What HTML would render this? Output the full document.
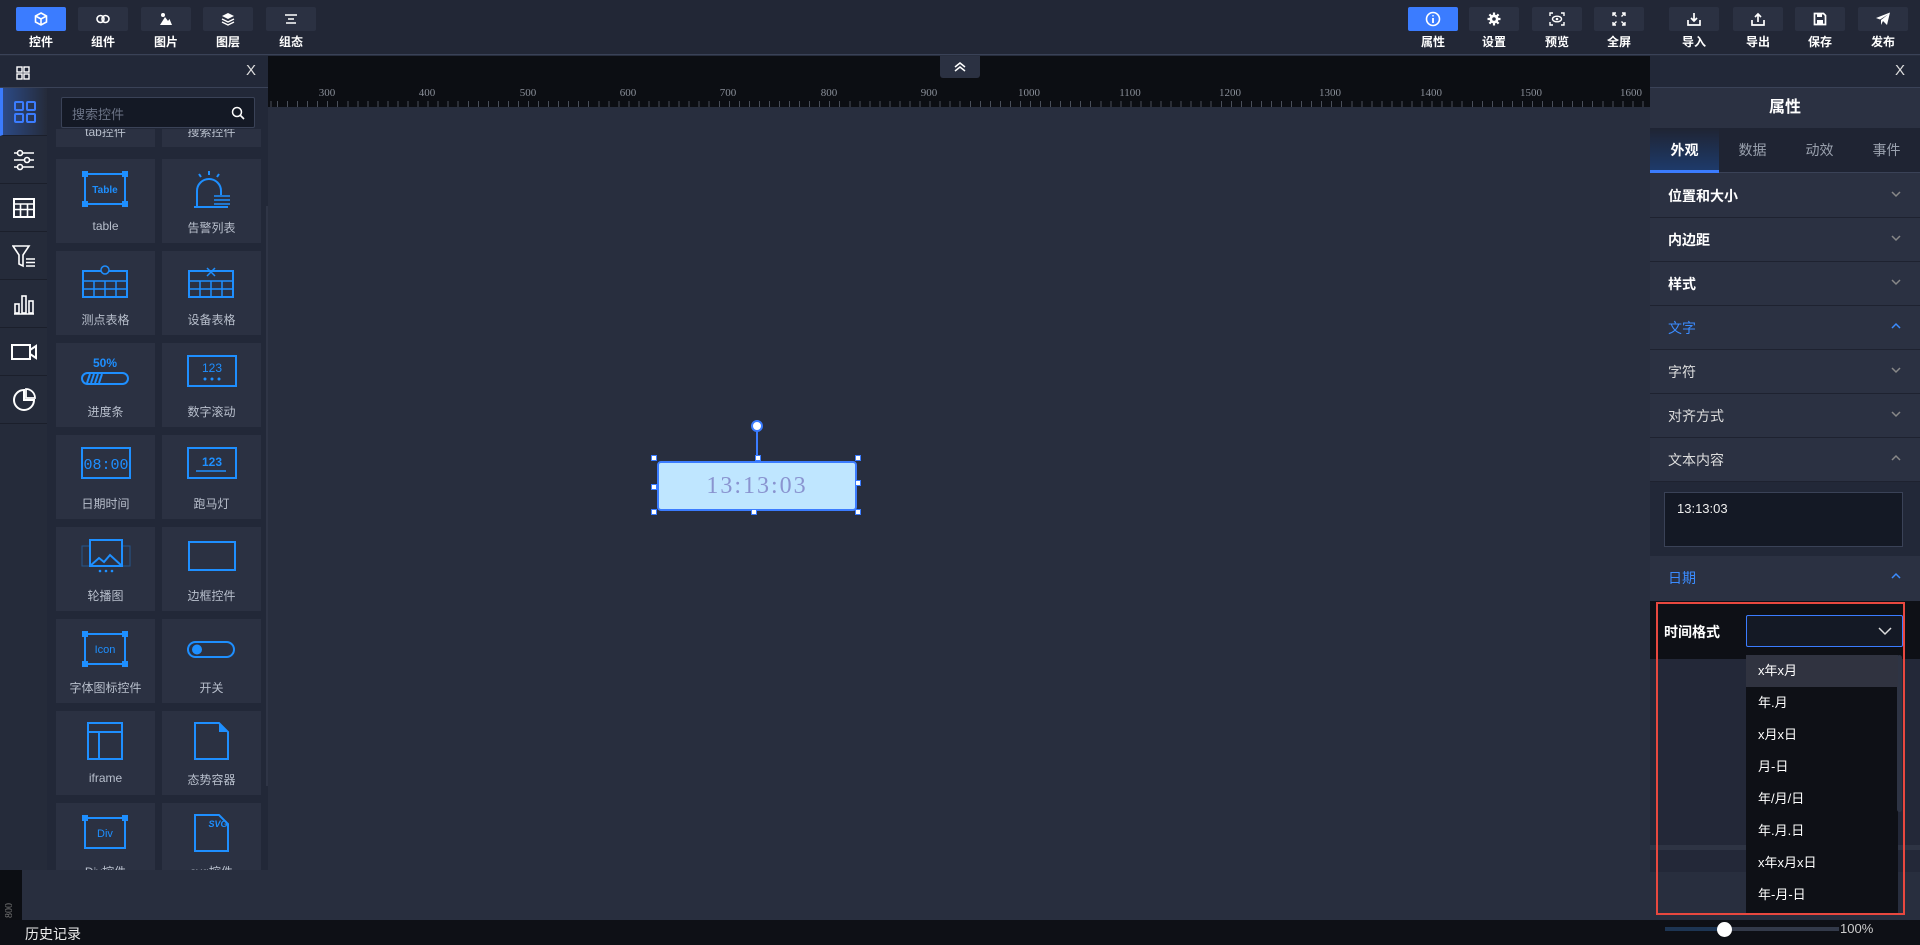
<!DOCTYPE html>
<html><head><meta charset="utf-8">
<style>
*{margin:0;padding:0;box-sizing:border-box}
body{width:1920px;height:945px;overflow:hidden;background:#282e3e;font-family:"Liberation Sans","Noto Sans CJK SC",sans-serif;color:#fff;position:relative}
.a{position:absolute}
.top{left:0;top:0;width:1920px;height:55px;background:#222736;border-bottom:1px solid #3a4257}
.btn{position:absolute;top:7px;width:50px;height:24px;background:#2b3142;border-radius:2px;display:flex;align-items:center;justify-content:center}
.btn.on{background:#3b7cff}
.bl{position:absolute;top:33px;width:60px;text-align:center;font-size:12px;font-weight:bold;color:#fff}
.lp{left:0;top:56px;width:268px;height:814px;background:#222838}
.card{position:absolute;width:99px;height:84px;background:#2b3142}
.card .t{position:absolute;left:0;right:0;top:60px;text-align:center;font-size:12px;color:#b8bfcc}
.card svg{position:absolute;left:24px;top:10px}
.ic{position:absolute;left:0;width:47px;height:48px;border-bottom:1px solid #1b1f2b;display:flex;align-items:center;justify-content:center}
.rp{left:1650px;top:56px;width:270px;height:816px;background:#2b3142}
.sec{position:absolute;left:0;width:270px;height:44px;border-bottom:1px solid #1e2230;font-size:14px;display:flex;align-items:center;padding-left:18px;color:#fff}
.sec .ch{position:absolute;right:18px;top:14px}
.dd{position:absolute;left:1746px;width:152px;height:32px;font-size:13px;color:#fff;padding-left:12px;line-height:32px}
</style></head><body>
<div class="a top"></div>
<div class="btn on" style="left:16px"><svg width="14" height="14" viewBox="0 0 14 14"><path d="M7 1L12.5 4V10L7 13L1.5 10V4Z M1.5 4L7 7L12.5 4 M7 7V13" stroke="#fff" stroke-width="1.6" fill="none"/></svg></div>
<div class="btn" style="left:78px"><svg width="16" height="10" viewBox="0 0 16 10"><circle cx="5.5" cy="5" r="3.5" stroke="#fff" stroke-width="1.6" fill="none"/><circle cx="10.5" cy="5" r="3.5" stroke="#fff" stroke-width="1.6" fill="none"/></svg></div>
<div class="btn" style="left:141px"><svg width="14" height="14" viewBox="0 0 14 14"><circle cx="4" cy="3" r="2" fill="#fff"/><path d="M1 13L6 5L9 9L10.5 7L13 13Z" fill="#fff"/></svg></div>
<div class="btn" style="left:203px"><svg width="14" height="14" viewBox="0 0 14 14"><path d="M7 1L13 4L7 7L1 4Z" fill="#fff"/><path d="M1 7L7 10L13 7M1 10L7 13L13 10" stroke="#fff" stroke-width="1.4" fill="none"/></svg></div>
<div class="btn" style="left:266px"><svg width="12" height="10" viewBox="0 0 12 10"><path d="M0 1H12M3 5H9M1 9H11" stroke="#fff" stroke-width="1.6"/></svg></div>
<div class="bl" style="left:11px">控件</div><div class="bl" style="left:73px">组件</div><div class="bl" style="left:136px">图片</div><div class="bl" style="left:198px">图层</div><div class="bl" style="left:261px">组态</div>
<div class="btn on" style="left:1408px"><svg width="16" height="16" viewBox="0 0 16 16"><circle cx="8" cy="8" r="6.5" stroke="#fff" stroke-width="1.6" fill="none"/><path d="M8 7V12M8 4.2V5.4" stroke="#fff" stroke-width="1.8"/></svg></div>
<div class="btn" style="left:1469px"><svg width="14" height="14" viewBox="0 0 14 14"><circle cx="7" cy="7" r="4.5" fill="#fff"/><path d="M7 0.5V13.5M0.5 7H13.5M2.4 2.4L11.6 11.6M11.6 2.4L2.4 11.6" stroke="#fff" stroke-width="2.2"/><circle cx="7" cy="7" r="1.8" fill="#2b3142"/></svg></div>
<div class="btn" style="left:1532px"><svg width="16" height="14" viewBox="0 0 16 14"><path d="M1 4V1H4M12 1H15V4M15 10V13H12M4 13H1V10" stroke="#fff" stroke-width="1.4" fill="none"/><ellipse cx="8" cy="7" rx="4.5" ry="2.8" stroke="#fff" stroke-width="1.4" fill="none"/><circle cx="8" cy="7" r="1.3" fill="#fff"/></svg></div>
<div class="btn" style="left:1594px"><svg width="14" height="14" viewBox="0 0 14 14"><path d="M1 4V1H4M1 1L4.5 4.5M10 1H13V4M13 1L9.5 4.5M13 10V13H10M13 13L9.5 9.5M4 13H1V10M1 13L4.5 9.5" stroke="#fff" stroke-width="1.4" fill="none"/></svg></div>
<div class="btn" style="left:1669px"><svg width="14" height="14" viewBox="0 0 14 14"><path d="M7 1V9M4 6L7 9L10 6M1 8V13H13V8" stroke="#fff" stroke-width="1.7" fill="none"/></svg></div>
<div class="btn" style="left:1733px"><svg width="14" height="14" viewBox="0 0 14 14"><path d="M7 10V2M4 5L7 2L10 5M1 8V13H13V8" stroke="#fff" stroke-width="1.7" fill="none"/></svg></div>
<div class="btn" style="left:1795px"><svg width="14" height="14" viewBox="0 0 14 14"><path d="M1.5 1.5H10.5L12.5 3.5V12.5H1.5Z" stroke="#fff" stroke-width="1.7" fill="none"/><rect x="4" y="2" width="5" height="3" fill="#fff"/><rect x="4" y="8" width="6" height="4" fill="#fff"/></svg></div>
<div class="btn" style="left:1858px"><svg width="16" height="14" viewBox="0 0 16 14"><path d="M1 6L15 0.5L12 13L8 9L6 13V8L13 2.5L5 7.5Z" fill="#fff"/></svg></div>
<div class="bl" style="left:1403px">属性</div><div class="bl" style="left:1464px">设置</div><div class="bl" style="left:1527px">预览</div><div class="bl" style="left:1589px">全屏</div><div class="bl" style="left:1664px">导入</div><div class="bl" style="left:1728px">导出</div><div class="bl" style="left:1790px">保存</div><div class="bl" style="left:1853px">发布</div>

<div class="a" style="left:268px;top:56px;width:1382px;height:51px;background:#0c0e13"></div>
<svg class="a" style="left:268px;top:56px" width="1382" height="51">
<g fill="#8a8f99" font-family="Liberation Serif" font-size="11" text-anchor="middle">
<text x="59" y="40">300</text><text x="159" y="40">400</text><text x="260" y="40">500</text><text x="360" y="40">600</text><text x="460" y="40">700</text><text x="561" y="40">800</text><text x="661" y="40">900</text><text x="761" y="40">1000</text><text x="862" y="40">1100</text><text x="962" y="40">1200</text><text x="1062" y="40">1300</text><text x="1163" y="40">1400</text><text x="1263" y="40">1500</text><text x="1363" y="40">1600</text></g>
</svg>
<div class="a" style="left:268px;top:101px;width:1382px;height:6px;background:repeating-linear-gradient(90deg,#4a4f5a 0 1px,transparent 1px 10.04px);background-position:9px 0"></div>
<div class="a" style="left:940px;top:56px;width:40px;height:22px;background:#2b3142;border-radius:0 0 3px 3px"><svg width="40" height="22"><path d="M15 11L20 7L25 11M15 15L20 11L25 15" stroke="#fff" stroke-width="1.5" fill="none"/></svg></div>
<div class="a" style="left:0;top:870px;width:22px;height:50px;background:#0c0e13"></div>
<div class="a" style="left:2px;top:905px;font-size:10px;color:#777;transform:rotate(-90deg);font-family:'Liberation Serif'">800</div>

<div class="a" style="left:756px;top:430px;width:2px;height:32px;background:#3b7cff"></div>
<div class="a" style="left:751px;top:420px;width:12px;height:12px;border-radius:50%;background:#fff;border:2px solid #3b7cff"></div>
<div class="a" style="left:657px;top:461px;width:200px;height:50px;background:#bfe6ff;border:2px solid #3b7cff;border-radius:4px;text-align:center;line-height:46px;font-family:'Liberation Serif',serif;font-size:24px;letter-spacing:2px;color:#8a94d0">13:13:03</div>
<div class="a" style="left:651px;top:455px;width:6px;height:6px;background:#fff;border:1px solid #3b7cff"></div>
<div class="a" style="left:755px;top:455px;width:6px;height:6px;background:#fff;border:1px solid #3b7cff"></div>
<div class="a" style="left:855px;top:455px;width:6px;height:6px;background:#fff;border:1px solid #3b7cff"></div>
<div class="a" style="left:651px;top:484px;width:6px;height:6px;background:#fff;border:1px solid #3b7cff"></div>
<div class="a" style="left:855px;top:480px;width:6px;height:6px;background:#fff;border:1px solid #3b7cff"></div>
<div class="a" style="left:651px;top:509px;width:6px;height:6px;background:#fff;border:1px solid #3b7cff"></div>
<div class="a" style="left:751px;top:509px;width:6px;height:6px;background:#fff;border:1px solid #3b7cff"></div>
<div class="a" style="left:855px;top:509px;width:6px;height:6px;background:#fff;border:1px solid #3b7cff"></div>

<div class="a lp">
 <div class="a" style="left:0;top:0;width:268px;height:32px;border-bottom:1px solid #3a4257"></div>
 <svg class="a" style="left:16px;top:10px" width="14" height="14"><rect x="1" y="1" width="5" height="5" stroke="#fff" fill="none" stroke-width="1.4"/><rect x="8" y="1" width="5" height="5" stroke="#fff" fill="none" stroke-width="1.4"/><rect x="1" y="8" width="5" height="5" stroke="#fff" fill="none" stroke-width="1.4"/><rect x="8" y="8" width="5" height="5" stroke="#fff" fill="none" stroke-width="1.4"/></svg>
 <div class="a" style="left:246px;top:6px;font-size:15px;color:#ddd">X</div>
 <div class="a" style="left:0;top:32px;width:47px;height:782px;background:#252b3a"></div>
 <div class="ic" style="top:32px;background:linear-gradient(90deg,#2c4a86,#252b3a);border-left:3px solid #3b7cff"><svg width="22" height="22"><rect x="1" y="1" width="8" height="8" rx="1" stroke="#3b7cff" stroke-width="2" fill="none"/><rect x="13" y="1" width="8" height="8" rx="1" stroke="#3b7cff" stroke-width="2" fill="none"/><rect x="1" y="13" width="8" height="8" rx="1" stroke="#3b7cff" stroke-width="2" fill="none"/><rect x="13" y="13" width="8" height="8" rx="1" stroke="#3b7cff" stroke-width="2" fill="none"/></svg></div>
 <div class="ic" style="top:80px"><svg width="22" height="22"><path d="M1 4H21M1 11H21M1 18H21" stroke="#fff" stroke-width="1.6"/><circle cx="7" cy="4" r="2.5" fill="#252b3a" stroke="#fff" stroke-width="1.6"/><circle cx="14" cy="11" r="2.5" fill="#252b3a" stroke="#fff" stroke-width="1.6"/><circle cx="7" cy="18" r="2.5" fill="#252b3a" stroke="#fff" stroke-width="1.6"/></svg></div>
 <div class="ic" style="top:128px"><svg width="22" height="22"><rect x="1" y="2" width="20" height="18" stroke="#fff" stroke-width="2" fill="none"/><path d="M1 7H21M1 12.5H21M7.5 7V20M14.5 7V20" stroke="#fff" stroke-width="1.6"/></svg></div>
 <div class="ic" style="top:176px"><svg width="24" height="24"><path d="M1 2H17L11 11V22L7 20V11Z" stroke="#fff" stroke-width="1.6" fill="none"/><path d="M14 15H23M14 18.5H23M14 22H23" stroke="#fff" stroke-width="1.5"/></svg></div>
 <div class="ic" style="top:224px"><svg width="22" height="22"><path d="M1 21H21" stroke="#fff" stroke-width="1.6"/><rect x="2" y="11" width="4" height="9" stroke="#fff" stroke-width="1.6" fill="none"/><rect x="9" y="3" width="4" height="17" stroke="#fff" stroke-width="1.6" fill="none"/><rect x="16" y="8" width="4" height="12" stroke="#fff" stroke-width="1.6" fill="none"/></svg></div>
 <div class="ic" style="top:272px"><svg width="26" height="20"><rect x="1" y="3" width="18" height="14" stroke="#fff" stroke-width="2" fill="none"/><path d="M19 8L25 4V16L19 12" stroke="#fff" stroke-width="2" fill="none"/></svg></div>
 <div class="ic" style="top:320px"><svg width="24" height="24"><path d="M12 2A10 10 0 1 0 22 12H12Z" stroke="#fff" stroke-width="2" fill="none"/><path d="M14 1A9 9 0 0 1 23 10H14Z" stroke="#fff" stroke-width="1.8" fill="none"/></svg></div>
 <div class="a" style="left:266px;top:150px;width:2px;height:580px;background:#2f3546"></div>
</div>
<div class="a" style="left:47px;top:129px;width:219px;height:741px;overflow:hidden">
 <div class="card" style="left:9px;top:-66px"><div class="t">tab控件</div></div>
 <div class="card" style="left:115px;top:-66px"><div class="t">搜索控件</div></div>
 <div class="card" style="left:9px;top:30px"><svg width="50" height="40"><rect x="5" y="5" width="40" height="30" stroke="#1e8fff" stroke-width="2" fill="none"/><rect x="2" y="2" width="6" height="6" fill="#1e8fff"/><rect x="42" y="2" width="6" height="6" fill="#1e8fff"/><rect x="2" y="32" width="6" height="6" fill="#1e8fff"/><rect x="42" y="32" width="6" height="6" fill="#1e8fff"/><text x="25" y="24" text-anchor="middle" fill="#1e8fff" font-size="10" font-weight="bold">Table</text></svg><div class="t">table</div></div>
 <div class="card" style="left:115px;top:30px"><svg width="50" height="40"><path d="M11 38V22A12 12 0 0 1 35 22V26" stroke="#1e8fff" stroke-width="2" fill="none"/><path d="M8 38H42M23 2V6M13 5L15 8M33 5L31 8" stroke="#1e8fff" stroke-width="2"/><path d="M28 27H44M28 31H44M28 35H44" stroke="#1e8fff" stroke-width="1.5"/></svg><div class="t">告警列表</div></div>
 <div class="card" style="left:9px;top:122px"><svg width="50" height="40"><rect x="3" y="10" width="44" height="26" stroke="#1e8fff" stroke-width="2" fill="none"/><path d="M3 20H47M3 28H47M14 20V36M25 20V36M36 20V36" stroke="#1e8fff" stroke-width="1.5"/><circle cx="25" cy="9" r="4" stroke="#1e8fff" stroke-width="1.5" fill="#2b3142"/></svg><div class="t">测点表格</div></div>
 <div class="card" style="left:115px;top:122px"><svg width="50" height="40"><rect x="3" y="10" width="44" height="26" stroke="#1e8fff" stroke-width="2" fill="none"/><path d="M3 20H47M3 28H47M14 20V36M25 20V36M36 20V36M21 7L29 15M29 7L21 15" stroke="#1e8fff" stroke-width="1.5"/></svg><div class="t">设备表格</div></div>
 <div class="card" style="left:9px;top:214px"><svg width="50" height="40"><text x="25" y="14" text-anchor="middle" fill="#1e8fff" font-size="12" font-weight="bold">50%</text><rect x="2" y="20" width="46" height="11" rx="5.5" stroke="#1e8fff" stroke-width="2" fill="none"/><path d="M7 30L10 21M11 30L14 21M15 30L18 21M19 30L22 21" stroke="#1e8fff" stroke-width="2"/></svg><div class="t">进度条</div></div>
 <div class="card" style="left:115px;top:214px"><svg width="52" height="40"><rect x="2" y="3" width="48" height="30" stroke="#1e8fff" stroke-width="2" fill="none"/><text x="26" y="19" text-anchor="middle" fill="#1e8fff" font-size="12">123</text><circle cx="19" cy="26" r="1.5" fill="#1e8fff"/><circle cx="26" cy="26" r="1.5" fill="#1e8fff"/><circle cx="33" cy="26" r="1.5" fill="#1e8fff"/></svg><div class="t">数字滚动</div></div>
 <div class="card" style="left:9px;top:306px"><svg width="52" height="40"><rect x="2" y="3" width="48" height="30" stroke="#1e8fff" stroke-width="2" fill="none"/><text x="26" y="24" text-anchor="middle" fill="#1e8fff" font-size="15" font-family="Liberation Mono">08:00</text></svg><div class="t">日期时间</div></div>
 <div class="card" style="left:115px;top:306px"><svg width="52" height="40"><rect x="2" y="3" width="48" height="30" stroke="#1e8fff" stroke-width="2" fill="none"/><text x="26" y="21" text-anchor="middle" fill="#1e8fff" font-size="12" font-weight="bold">123</text><path d="M10 26H40" stroke="#1e8fff" stroke-width="1.5"/></svg><div class="t">跑马灯</div></div>
 <div class="card" style="left:9px;top:398px"><svg width="52" height="40"><rect x="2" y="9" width="48" height="20" stroke="#1e8fff" stroke-width="1" opacity=".4" fill="none"/><rect x="10" y="3" width="32" height="26" stroke="#1e8fff" stroke-width="2" fill="#2b3142"/><path d="M10 29L19 21L24 25L30 18L42 29" stroke="#1e8fff" stroke-width="2" fill="none"/><circle cx="20" cy="34" r="1.3" fill="#1e8fff"/><circle cx="26" cy="34" r="1.3" fill="#1e8fff"/><circle cx="32" cy="34" r="1.3" fill="#1e8fff"/></svg><div class="t">轮播图</div></div>
 <div class="card" style="left:115px;top:398px"><svg width="52" height="40"><rect x="3" y="5" width="46" height="28" stroke="#1e8fff" stroke-width="2" fill="none"/></svg><div class="t">边框控件</div></div>
 <div class="card" style="left:9px;top:490px"><svg width="50" height="40"><rect x="5" y="5" width="40" height="30" stroke="#1e8fff" stroke-width="2" fill="none"/><rect x="2" y="2" width="6" height="6" fill="#1e8fff"/><rect x="42" y="2" width="6" height="6" fill="#1e8fff"/><rect x="2" y="32" width="6" height="6" fill="#1e8fff"/><rect x="42" y="32" width="6" height="6" fill="#1e8fff"/><text x="25" y="24" text-anchor="middle" fill="#1e8fff" font-size="11">Icon</text></svg><div class="t">字体图标控件</div></div>
 <div class="card" style="left:115px;top:490px"><svg width="50" height="40"><rect x="2" y="13" width="46" height="15" rx="7.5" stroke="#1e8fff" stroke-width="2" fill="none"/><circle cx="11" cy="20.5" r="5" fill="#1e8fff"/></svg><div class="t">开关</div></div>
 <div class="card" style="left:9px;top:582px"><svg width="50" height="40"><rect x="8" y="2" width="34" height="36" stroke="#1e8fff" stroke-width="2" fill="none"/><path d="M8 11H42M19 11V38" stroke="#1e8fff" stroke-width="2"/></svg><div class="t">iframe</div></div>
 <div class="card" style="left:115px;top:582px"><svg width="50" height="40"><path d="M9 2H33L42 11V38H9Z" stroke="#1e8fff" stroke-width="2" fill="none"/><path d="M33 2V11H42Z" fill="#1e8fff"/></svg><div class="t">态势容器</div></div>
 <div class="card" style="left:9px;top:674px"><svg width="50" height="40"><rect x="5" y="5" width="40" height="30" stroke="#1e8fff" stroke-width="2" fill="none"/><rect x="2" y="2" width="6" height="6" fill="#1e8fff"/><rect x="42" y="2" width="6" height="6" fill="#1e8fff"/><text x="25" y="24" text-anchor="middle" fill="#1e8fff" font-size="11">Div</text></svg><div class="t">Div控件</div></div>
 <div class="card" style="left:115px;top:674px"><svg width="50" height="40"><path d="M9 2H33L42 11V38H9Z" stroke="#1e8fff" stroke-width="2" fill="none"/><text x="32" y="14" text-anchor="middle" fill="#1e8fff" font-size="9" font-style="italic" font-weight="bold">SVG</text></svg><div class="t">svg控件</div></div>
</div>
<div class="a" style="left:47px;top:88px;width:219px;height:41px;background:#222838"></div>
<div class="a" style="left:61px;top:97px;width:194px;height:31px;background:#141925;border:1px solid #3a4257;border-radius:2px;font-size:13px;color:#6b7385;padding:6px 10px">搜索控件</div>
<svg class="a" style="left:231px;top:106px" width="14" height="14"><circle cx="6" cy="6" r="4.5" stroke="#fff" stroke-width="1.5" fill="none"/><path d="M9.5 9.5L13 13" stroke="#fff" stroke-width="1.6"/></svg>

<div class="a" style="left:1650px;top:56px;width:270px;height:32px;background:#222838;border-bottom:1px solid #3a4257"></div>
<div class="a" style="left:1895px;top:62px;font-size:15px;color:#ddd">X</div>
<div class="a rp" style="top:88px;height:784px">
 <div class="a" style="left:0;top:0;width:270px;height:40px;text-align:center;line-height:40px;font-size:16px;font-weight:bold">属性</div>
 <div class="a" style="left:0;top:40px;width:270px;height:45px;background:#1f2433;border-bottom:1px solid #3a4257"></div>
 <div class="a" style="left:0;top:40px;width:69px;height:45px;background:linear-gradient(#1f2433,#1e3a6a);border-bottom:3px solid #3b7cff;text-align:center;line-height:45px;font-size:14px;font-weight:bold">外观</div>
 <div class="a" style="left:69px;top:40px;width:67px;height:45px;text-align:center;line-height:45px;font-size:14px;color:#9aa1ae">数据</div>
 <div class="a" style="left:136px;top:40px;width:67px;height:45px;text-align:center;line-height:45px;font-size:14px;color:#9aa1ae">动效</div>
 <div class="a" style="left:203px;top:40px;width:67px;height:45px;text-align:center;line-height:45px;font-size:14px;color:#9aa1ae">事件</div>
 <div class="sec" style="top:86px;font-weight:bold">位置和大小<svg class="ch" width="12" height="12"><path d="M2 4L6 8L10 4" stroke="#888" stroke-width="1.5" fill="none"/></svg></div>
 <div class="sec" style="top:130px;font-weight:bold">内边距<svg class="ch" width="12" height="12"><path d="M2 4L6 8L10 4" stroke="#888" stroke-width="1.5" fill="none"/></svg></div>
 <div class="sec" style="top:174px;font-weight:bold">样式<svg class="ch" width="12" height="12"><path d="M2 4L6 8L10 4" stroke="#888" stroke-width="1.5" fill="none"/></svg></div>
 <div class="sec" style="top:218px;color:#3b8cff">文字<svg class="ch" width="12" height="12"><path d="M2 8L6 4L10 8" stroke="#3b8cff" stroke-width="1.5" fill="none"/></svg></div>
 <div class="sec" style="top:262px;color:#ddd">字符<svg class="ch" width="12" height="12"><path d="M2 4L6 8L10 4" stroke="#888" stroke-width="1.5" fill="none"/></svg></div>
 <div class="sec" style="top:306px;color:#ddd">对齐方式<svg class="ch" width="12" height="12"><path d="M2 4L6 8L10 4" stroke="#888" stroke-width="1.5" fill="none"/></svg></div>
 <div class="sec" style="top:350px;color:#ddd">文本内容<svg class="ch" width="12" height="12"><path d="M2 8L6 4L10 8" stroke="#888" stroke-width="1.5" fill="none"/></svg></div>
 <div class="a" style="left:0;top:394px;width:270px;height:74px;background:#222838"></div>
 <div class="a" style="left:14px;top:404px;width:239px;height:55px;background:#141925;border:1px solid #3a4257;font-size:13px;padding:8px 12px;color:#eee">13:13:03</div>
 <div class="sec" style="top:468px;color:#3b8cff;border:none">日期<svg class="ch" width="12" height="12"><path d="M2 8L6 4L10 8" stroke="#3b8cff" stroke-width="1.5" fill="none"/></svg></div>
 <div class="a" style="left:0;top:513px;width:270px;height:58px;background:#0e1016"></div>
 <div class="a" style="left:0;top:571px;width:270px;height:213px;background:#232838"></div>
 <div class="a" style="left:0;top:757px;width:270px;height:5px;background:#2e3444"></div>
</div>
<div class="a" style="left:1664px;top:622px;font-size:14px;font-weight:bold">时间格式</div>
<div class="a" style="left:1746px;top:615px;width:157px;height:32px;border:1px solid #3b7cff;background:#141925;border-radius:2px"><svg class="a" style="right:10px;top:9px" width="14" height="12"><path d="M1 3L7 9L13 3" stroke="#ddd" stroke-width="1.5" fill="none"/></svg></div>
<div class="a" style="left:1746px;top:655px;width:152px;height:260px;background:#0e1016"></div>
<div class="a" style="left:1897px;top:655px;width:5px;height:157px;background:#2e3444;border-radius:3px"></div>
<div class="dd" style="top:655px;background:#303340">x年x月</div>
<div class="dd" style="top:687px">年.月</div>
<div class="dd" style="top:719px">x月x日</div>
<div class="dd" style="top:751px">月-日</div>
<div class="dd" style="top:783px">年/月/日</div>
<div class="dd" style="top:815px">年.月.日</div>
<div class="dd" style="top:847px">x年x月x日</div>
<div class="dd" style="top:879px">年-月-日</div>
<div class="a" style="left:1656px;top:602px;width:249px;height:313px;border:2px solid #e8483f"></div>

<div class="a" style="left:0;top:920px;width:1920px;height:25px;background:#0e1016"></div>
<div class="a" style="left:25px;top:924px;font-size:14px;color:#eee">历史记录</div>
<div class="a" style="left:1665px;top:927px;width:174px;height:4px;background:#333a4a"></div>
<div class="a" style="left:1665px;top:927px;width:59px;height:4px;background:#1d3553"></div>
<div class="a" style="left:1717px;top:922px;width:15px;height:15px;border-radius:50%;background:#fff"></div>
<div class="a" style="left:1840px;top:921px;font-size:13px;color:#ccc">100%</div>
</body></html>
